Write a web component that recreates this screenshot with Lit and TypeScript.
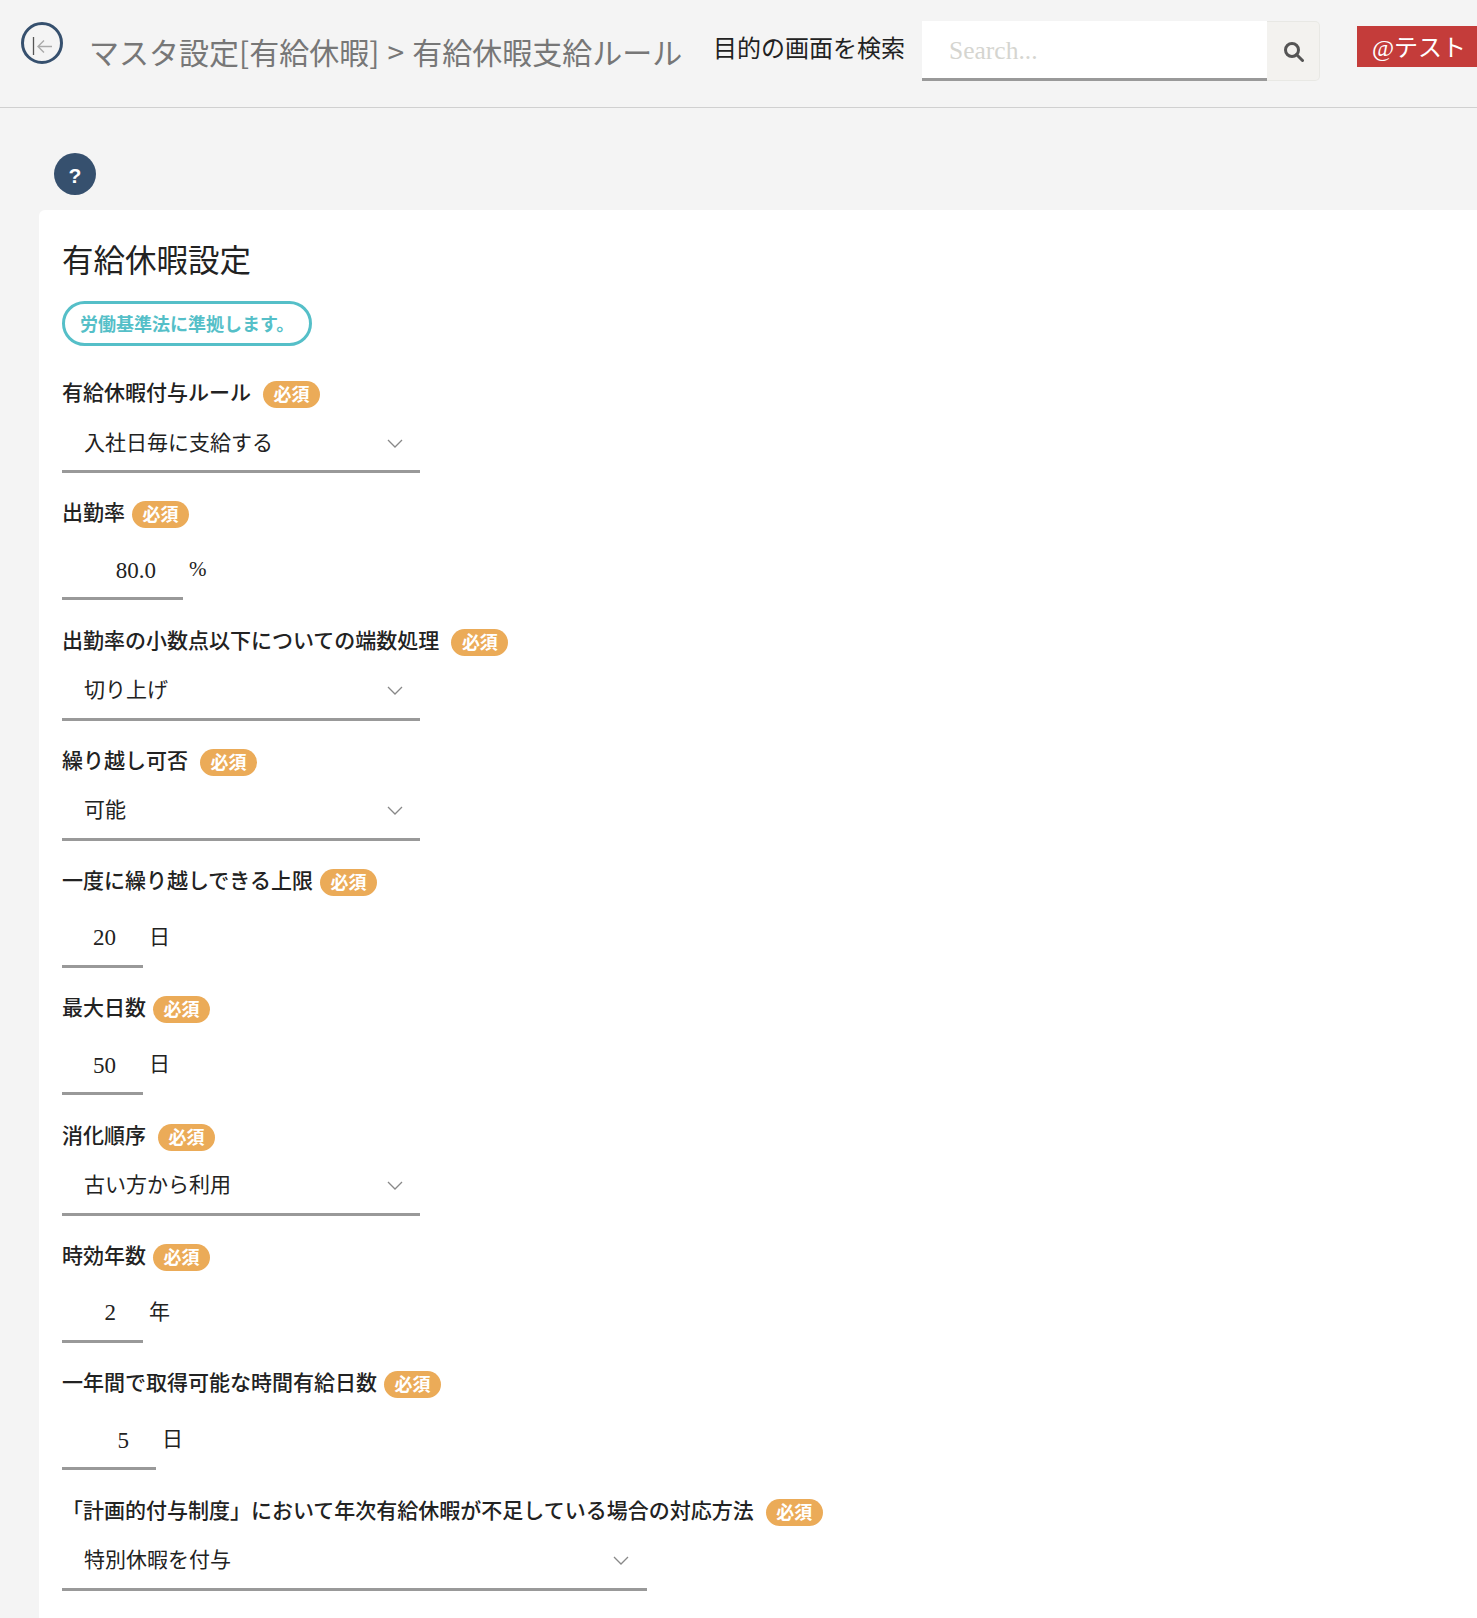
import { LitElement, css, html } from "lit";
import { customElement } from "lit/decorators.js";

type Field = {
  label: string;
  spaced?: boolean;
  value: string;
  // select fields have a width class, number fields a unit
  unit?: string;
  size: string;
};

const fields: Field[] = [
  { label: "有給休暇付与ルール", spaced: true, value: "入社日毎に支給する", size: "select" },
  { label: "出勤率", value: "80.0", unit: "%", size: "w121" },
  { label: "出勤率の小数点以下についての端数処理", spaced: true, value: "切り上げ", size: "select" },
  { label: "繰り越し可否", spaced: true, value: "可能", size: "select" },
  { label: "一度に繰り越しできる上限", value: "20", unit: "日", size: "w81" },
  { label: "最大日数", value: "50", unit: "日", size: "w81" },
  { label: "消化順序", spaced: true, value: "古い方から利用", size: "select" },
  { label: "時効年数", value: "2", unit: "年", size: "w81" },
  { label: "一年間で取得可能な時間有給日数", value: "5", unit: "日", size: "w94" },
  { label: "「計画的付与制度」において年次有給休暇が不足している場合の対応方法", spaced: true, value: "特別休暇を付与", size: "select wide" },
];

@customElement("app-root")
export class AppRoot extends LitElement {
  static styles = css`
    :host {
      display: block;
      height: 1618px;
      overflow: hidden;
      background: #f4f4f4;
      color: #222;
      font-family: "Liberation Serif", "Noto Sans CJK JP", serif;
    }
    .header {
      display: flex;
      align-items: flex-start;
      height: 108px;
      box-sizing: border-box;
      border-bottom: 1px solid #d0d0d0;
    }
    .back {
      margin: 22px 0 0 21px;
      width: 42px;
      height: 42px;
      flex: none;
    }
    .title {
      margin: 29px 0 0 26px;
      width: 624px;
      flex: none;
      font-family: "Noto Sans CJK JP", sans-serif;
      font-size: 30px;
      line-height: 44px;
      word-spacing: 1.5px;
      color: #777;
      white-space: nowrap;
    }
    .search-label {
      margin-top: 31px;
      width: 209px;
      flex: none;
      font-size: 24px;
      line-height: 36px;
      white-space: nowrap;
    }
    .search {
      display: flex;
      margin-top: 21px;
      height: 60px;
    }
    .search input {
      width: 345px;
      box-sizing: border-box;
      border: none;
      border-bottom: 3px solid #999;
      background: #fff;
      padding: 2px 27px 0;
      font: 25.5px "Liberation Serif", serif;
      outline: none;
    }
    .search input::placeholder {
      color: #d5d5d0;
    }
    .search button {
      display: flex;
      align-items: center;
      justify-content: center;
      width: 53px;
      padding: 0 0 0 1px;
      background: #f3f2ef;
      border: 1px solid #e8e8e4;
      border-left: none;
      border-radius: 0 5px 5px 0;
    }
    .user {
      margin: 26px 0 0 37px;
      flex: 1;
      height: 41px;
      box-sizing: border-box;
      background: #c43c3a;
      color: #fff;
      font-size: 24px;
      line-height: 41px;
      padding: 2px 0 0 15px;
      white-space: nowrap;
    }
    .help {
      display: flex;
      align-items: center;
      justify-content: center;
      box-sizing: border-box;
      margin: 45px 0 0 54px;
      padding-top: 4px;
      width: 42px;
      height: 42px;
      border-radius: 50%;
      background: #36506e;
      color: #fff;
      font: bold 21px "Liberation Sans", sans-serif;
    }
    .card {
      margin: 15px 0 0 39px;
      height: 1500px;
      box-sizing: border-box;
      padding: 29px 23px;
      background: #fff;
      border-radius: 6px 0 0 6px;
    }
    h1 {
      margin: 0;
      font-size: 31.5px;
      font-weight: 400;
      line-height: 46px;
    }
    .note {
      display: inline-block;
      margin: 16px 0 31px;
      height: 45px;
      box-sizing: border-box;
      padding: 0 15px 0 15px;
      border: 3px solid #55bfc8;
      border-radius: 23px;
      color: #55bfc8;
      font-size: 18px;
      font-weight: 700;
      line-height: 43px;
      white-space: nowrap;
    }
    .field {
      margin-bottom: 24px;
    }
    .field.num {
      margin-bottom: 24.5px;
    }
    .label {
      display: flex;
      align-items: center;
      height: 28px;
      font-size: 21px;
      font-weight: 500;
      white-space: nowrap;
    }
    .badge {
      margin-left: 7px;
      width: 57px;
      height: 27px;
      margin-top: 7px;
      border-radius: 14px;
      background: #ebab58;
      color: #fff;
      font-size: 18px;
      font-weight: 700;
      line-height: 29px;
      text-align: center;
    }
    .badge.spaced {
      margin-left: 12px;
    }
    .control {
      display: flex;
      align-items: center;
      justify-content: space-between;
      box-sizing: border-box;
      margin-top: 8px;
      border-bottom: 3px solid #999;
    }
    .select {
      width: 358px;
      height: 60px;
      padding: 0 17px 2px 22px;
      font-size: 21px;
    }
    .select svg {
      margin-top: 6px;
    }
    .select.wide {
      width: 585px;
      padding-right: 18px;
    }
    .row {
      display: flex;
      align-items: flex-start;
    }
    .input {
      height: 67px;
      justify-content: flex-end;
      padding: 11px 27px 0 0;
      font-size: 23px;
    }
    .w121 {
      width: 121px;
    }
    .w81 {
      width: 81px;
    }
    .w94 {
      width: 94px;
    }
    .unit {
      margin: 16px 0 0 6px;
      height: 57px;
      line-height: 57px;
      font-size: 21px;
    }
  `;

  renderField(f: Field) {
    const isNum = f.unit !== undefined;
    return html`
      <div class="field ${isNum ? "num" : ""}">
        <div class="label">
          ${f.label}<span class="badge ${f.spaced ? "spaced" : ""}">必須</span>
        </div>
        ${isNum
          ? html`<div class="row">
              <div class="control input ${f.size}">${f.value}</div>
              <span class="unit">${f.unit}</span>
            </div>`
          : html`<div class="control ${f.size}">
              <span>${f.value}</span>
              <svg width="16" height="10" viewBox="0 0 16 10" fill="none" stroke="#888" stroke-width="1.3">
                <path d="M1 1l7 7 7-7" />
              </svg>
            </div>`}
      </div>
    `;
  }

  render() {
    return html`
      <div class="header">
        <svg class="back" viewBox="0 0 42 42" fill="none">
          <circle cx="21" cy="21" r="19.5" stroke="#36506e" stroke-width="3" />
          <path d="M12.5 15v18" stroke="#555" stroke-width="1.3" />
          <path d="M31 24.5H17m6-6l-6 6 6 6" stroke="#aaa" stroke-width="1.4" />
        </svg>
        <div class="title">マスタ設定[有給休暇] > 有給休暇支給ルール</div>
        <div class="search-label">目的の画面を検索</div>
        <div class="search">
          <input placeholder="Search..." />
          <button aria-label="search">
            <svg width="21" height="21" viewBox="0 0 21 21" fill="none" stroke="#555" stroke-width="3">
              <circle cx="9" cy="9" r="6.5" />
              <path d="M13.5 13.5l6 6" stroke-linecap="round" />
            </svg>
          </button>
        </div>
        <div class="user">@テスト</div>
      </div>
      <div class="help">?</div>
      <div class="card">
        <h1>有給休暇設定</h1>
        <div class="note">労働基準法に準拠します。</div>
        ${fields.map((f) => this.renderField(f))}
      </div>
    `;
  }
}
